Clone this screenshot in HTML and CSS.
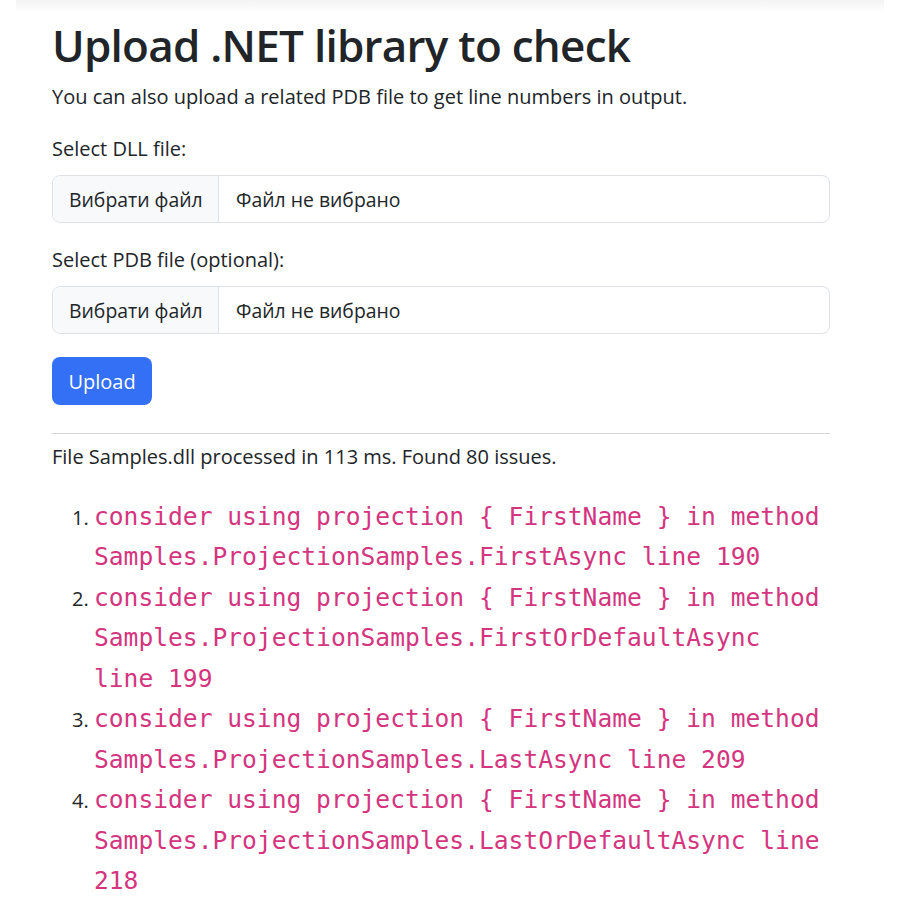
FILE: index.html
```html
<!DOCTYPE html>
<html lang="en">
<head>
<meta charset="utf-8">
<title>Upload .NET library to check</title>
<link rel="stylesheet" href="styles.css">
</head>
<body>
<div class="topshade"></div>
<main class="page">
  <h1 class="title">Upload .NET library to check</h1>
  <p class="lead">You can also upload a related PDB file to get line numbers in output.</p>
  <form class="upload-form">
    <div class="field">
      <label class="field-label">Select DLL file:</label>
      <div class="file-input">
        <span class="file-btn">Вибрати файл</span>
        <span class="file-name">Файл не вибрано</span>
      </div>
    </div>
    <div class="field">
      <label class="field-label">Select PDB file (optional):</label>
      <div class="file-input">
        <span class="file-btn">Вибрати файл</span>
        <span class="file-name">Файл не вибрано</span>
      </div>
    </div>
    <div class="actions">
      <button type="button" class="btn-primary">Upload</button>
    </div>
  </form>
  <hr class="divider">
  <p class="summary">File Samples.dll processed in 113 ms. Found 80 issues.</p>
  <ol class="issues">
    <li><code>consider using projection { FirstName } in method Samples.ProjectionSamples.FirstAsync line 190</code></li>
    <li><code>consider using projection { FirstName } in method Samples.ProjectionSamples.FirstOrDefaultAsync line 199</code></li>
    <li><code>consider using projection { FirstName } in method Samples.ProjectionSamples.LastAsync line 209</code></li>
    <li><code>consider using projection { FirstName } in method Samples.ProjectionSamples.LastOrDefaultAsync line 218</code></li>
  </ol>
</main>
</body>
</html>
```
FILE: styles.css
```css
html, body {
  margin: 0;
  padding: 0;
  background: #ffffff;
  overflow: hidden;
}
body {
  font-family: "Open Sans", "Noto Sans", sans-serif;
  color: #212529;
}
.topshade {
  height: 13px;
  margin: 0 16px;
  background: linear-gradient(#f3f3f3, #ffffff);
}
.page {
  width: 778px;
  padding: 0 0 0 52px;
}
.title {
  margin: 6px 0 0;
  font-size: 44px;
  font-weight: 550;
  line-height: 52px;
  letter-spacing: -0.75px;
}
.lead {
  margin: 11px 0 0;
  font-size: 20px;
  line-height: 30px;
}
.upload-form {
  display: flex;
  flex-direction: column;
}
.field {
  display: flex;
  flex-direction: column;
}
.field-label {
  margin-top: 21.5px;
  font-size: 20px;
  line-height: 30px;
  height: 30px;
}
.file-input {
  margin-top: 11.5px;
  height: 48px;
  box-sizing: border-box;
  border: 1px solid #dee2e6;
  border-radius: 8px;
  display: flex;
  align-items: stretch;
  overflow: hidden;
  font-size: 19.4px;
  white-space: nowrap;
}
.file-btn {
  display: flex;
  align-items: center;
  padding: 0 0 0 16px;
  width: 166px;
  flex: none;
  box-sizing: border-box;
  background: #f8f9fa;
  border-right: 1px solid #dee2e6;
}
.file-name {
  display: flex;
  align-items: center;
  padding-left: 17px;
}
.actions {
  margin-top: 23px;
}
.btn-primary {
  display: block;
  font-family: inherit;
  font-size: 20px;
  color: #ffffff;
  background: #3370f5;
  border: none;
  border-radius: 8px;
  width: 100px;
  height: 48px;
  padding: 0;
  cursor: pointer;
}
.divider {
  margin: 28px 0 0;
  border: 0;
  border-top: 1px solid #d3d4d5;
}
.summary {
  margin: 8px 0 0;
  font-size: 20px;
  line-height: 30px;
}
.issues {
  margin: 24.5px 0 0;
  padding-left: 42px;
  font-family: "DejaVu Sans Mono", "Liberation Mono", monospace;
  font-size: 24.6px;
  line-height: 40.5px;
}
.issues li::marker {
  font-family: "Open Sans", "Noto Sans", sans-serif;
  font-size: 20px;
  color: #212529;
}
.issues code {
  font-family: inherit;
  color: #d4357f;
  word-wrap: break-word;
}
```
